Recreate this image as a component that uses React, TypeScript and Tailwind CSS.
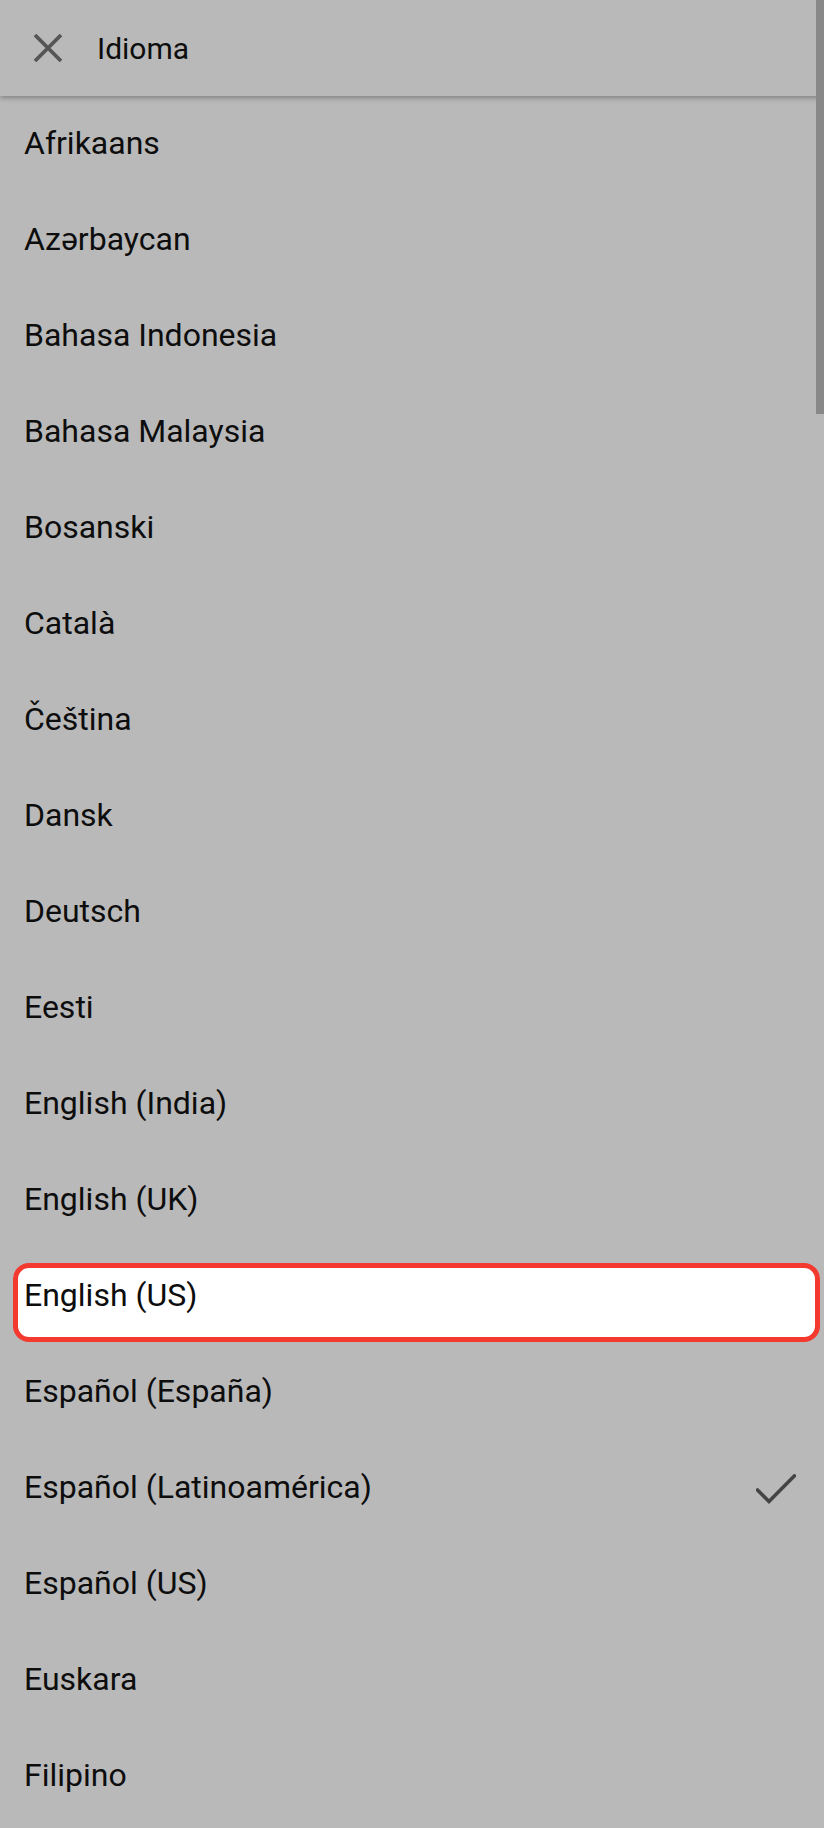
const languages = [
  "Afrikaans",
  "Azərbaycan",
  "Bahasa Indonesia",
  "Bahasa Malaysia",
  "Bosanski",
  "Català",
  "Čeština",
  "Dansk",
  "Deutsch",
  "Eesti",
  "English (India)",
  "English (UK)",
  "English (US)",
  "Español (España)",
  "Español (Latinoamérica)",
  "Español (US)",
  "Euskara",
  "Filipino",
];

const focused = "English (US)";
const selected = "Español (Latinoamérica)";

function CloseIcon() {
  return (
    <svg width="30" height="30" viewBox="0 0 30 30" className="shrink-0">
      <path d="M2 2 L28 28 M28 2 L2 28" stroke="#555555" strokeWidth="3.8" fill="none" />
    </svg>
  );
}

function CheckIcon() {
  return (
    <svg width="40" height="40" viewBox="0 0 40 40" className="shrink-0">
      <path
        d="M1.5 22 L13 33.5 L38.5 7.8"
        stroke="#444444"
        strokeWidth="3.6"
        strokeLinecap="round"
        fill="none"
      />
    </svg>
  );
}

function LanguageRow({ name }: { name: string }) {
  const isFocused = name === focused;
  return (
    <div className="relative flex h-[96px] items-center justify-between pl-[24px] pr-[28px]">
      {isFocused && (
        <div className="absolute left-[13px] top-[15px] h-[79px] w-[807px] rounded-[16px] border-[5px] border-[#f4392f] bg-white" />
      )}
      <span className="relative -top-[1px] text-[32px] text-[#0d0d0d]">{name}</span>
      {name === selected && <CheckIcon />}
    </div>
  );
}

export default function App() {
  return (
    <div
      className="relative h-[1828px] w-[824px] overflow-hidden bg-[#b9b9b9]"
      style={{ fontFamily: "Roboto, 'Noto Sans', sans-serif" }}
    >
      <div className="relative z-10 flex h-[96px] items-center gap-[34px] pl-[33px] bg-[#b9b9b9] shadow-[0_2px_5px_rgba(0,0,0,0.3)]">
        <CloseIcon />
        <span className="text-[30px] text-[#0d0d0d]">Idioma</span>
      </div>
      <div className="flex flex-col">
        {languages.map((l) => (
          <LanguageRow key={l} name={l} />
        ))}
      </div>
      <div className="absolute right-0 top-0 z-20 h-[414px] w-[8px] bg-[#888888]" />
    </div>
  );
}
